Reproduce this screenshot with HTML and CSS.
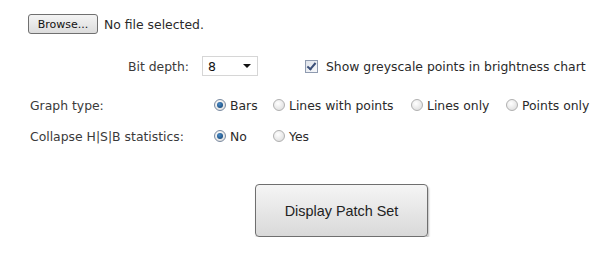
FILE: index.html
```html
<!DOCTYPE html>
<html>
<head>
<meta charset="utf-8">
<link rel="stylesheet" href="styles.css">
</head>
<body>
<div class="page">
  <div class="file-row">
    <button class="browse">Browse...</button>
    <span class="file-name">No file selected.</span>
  </div>
  <div class="depth-row">
    <span class="depth-label">Bit depth:</span>
    <div class="select"><span class="select-value">8</span><span class="select-arrow"></span></div>
    <label class="check"><span class="checkbox"></span>Show greyscale points in brightness chart</label>
  </div>
  <div class="opt-grid">
    <span class="opt-label">Graph type:</span>
    <label class="radio-item"><span class="radio on"></span>Bars</label>
    <label class="radio-item"><span class="radio"></span>Lines with points</label>
    <label class="radio-item"><span class="radio"></span>Lines only</label>
    <label class="radio-item"><span class="radio"></span>Points only</label>
    <span class="opt-label">Collapse H|S|B statistics:</span>
    <label class="radio-item"><span class="radio on"></span>No</label>
    <label class="radio-item"><span class="radio"></span>Yes</label>
  </div>
  <div class="submit-row">
    <button class="display">Display Patch Set</button>
  </div>
</div>
</body>
</html>
```
FILE: styles.css
```css
html, body {
  margin: 0;
  padding: 0;
  background: #ffffff;
}
body {
  font-family: "DejaVu Sans", Tahoma, sans-serif;
  font-size: 12.4px;
  color: #3a3a3a;
}
.page {
  padding: 14px 0 0 28px;
}
.file-row {
  display: flex;
  align-items: center;
  gap: 6px;
  height: 20px;
}
.browse {
  width: 70px;
  height: 20px;
  padding: 0;
  border: 1px solid #707070;
  border-radius: 3px;
  background: linear-gradient(#f4f4f4, #dcdcdc);
  font-family: "DejaVu Sans", Tahoma, sans-serif;
  font-size: 11px;
  color: #111;
}
.file-name {
  color: #2a2a2a;
}
.depth-row {
  display: flex;
  align-items: center;
  margin-top: 22px;
  height: 20px;
}
.depth-label {
  margin-left: 100px;
  width: 74px;
}
.select {
  height: 18px;
  border: 1px solid #d6d6d6;
  display: flex;
  align-items: center;
  justify-content: space-between;
  padding: 0 6px 0 5px;
  box-sizing: content-box;
  width: 43px;
}
.select-value {
  color: #111;
  font-size: 12.5px;
}
.select-arrow {
  width: 0;
  height: 0;
  border-left: 4px solid transparent;
  border-right: 4px solid transparent;
  border-top: 4px solid #111;
}
.check {
  display: flex;
  align-items: center;
  margin-left: 47px;
  gap: 8px;
  color: #2a2a2a;
}
.checkbox {
  width: 11px;
  height: 11px;
  border: 1px solid #8f9bb0;
  background: linear-gradient(135deg, #dfe3ea, #f8f9fb);
  position: relative;
}
.checkbox::after {
  content: "";
  position: absolute;
  left: 3px;
  top: 0px;
  width: 3px;
  height: 7px;
  border-right: 2px solid #3b4f78;
  border-bottom: 2px solid #3b4f78;
  transform: rotate(40deg);
}
.opt-grid {
  display: grid;
  grid-template-columns: 184px 59px 138px 95px auto;
  grid-auto-rows: 20px;
  row-gap: 11px;
  margin-top: 19px;
  margin-left: 2px;
  align-items: center;
}
.opt-label {
  grid-column: 1;
  color: #3a3a3a;
}
.radio-item {
  display: flex;
  align-items: center;
  gap: 4px;
  color: #2a2a2a;
  white-space: nowrap;
}
.radio {
  width: 10px;
  height: 10px;
  border-radius: 50%;
  border: 1px solid #b0b0b0;
  background: radial-gradient(circle at 40% 35%, #ffffff, #d8d8d8);
  position: relative;
  flex: none;
}
.radio.on {
  border-color: #7a8aa0;
}
.radio.on::after {
  content: "";
  position: absolute;
  left: 2px;
  top: 2px;
  width: 6px;
  height: 6px;
  border-radius: 50%;
  background: radial-gradient(circle at 40% 35%, #4a8cc8, #0b3a6a);
}
.submit-row {
  margin-top: 38px;
  padding-left: 227px;
}
.display {
  width: 173px;
  height: 53px;
  border: 1px solid #6f6f6f;
  border-radius: 4px;
  background: linear-gradient(#f5f5f5, #d9d9d9);
  box-shadow: 1px 2px 2px rgba(0,0,0,0.25);
  font-family: "Liberation Sans", Arial, sans-serif;
  font-size: 14.4px;
  color: #222;
  padding: 0;
}
```
